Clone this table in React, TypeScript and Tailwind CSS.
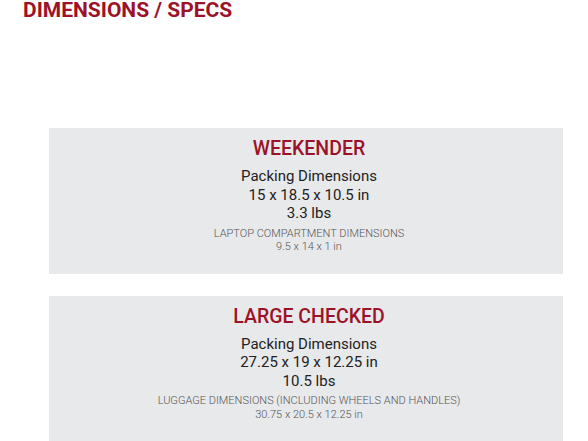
const specs = [
  {
    name: 'WEEKENDER',
    packing: '15 x 18.5 x 10.5 in',
    weight: '3.3 lbs',
    extraLabel: 'LAPTOP COMPARTMENT DIMENSIONS',
    extraValue: '9.5 x 14 x 1 in',
  },
  {
    name: 'LARGE CHECKED',
    packing: '27.25 x 19 x 12.25 in',
    weight: '10.5 lbs',
    extraLabel: 'LUGGAGE DIMENSIONS (INCLUDING WHEELS AND HANDLES)',
    extraValue: '30.75 x 20.5 x 12.25 in',
  },
];

type Spec = (typeof specs)[number];

const SpecCard = ({ spec }: { spec: Spec }) => (
  <div className="w-[514px] bg-[#e8e9eb] pt-[9px] pb-[20px] pl-[6px] text-center">
    <h3 className="text-[19.5px] leading-[24px] font-medium text-[#9c1228]">{spec.name}</h3>
    <div className="mt-[6px] text-[15px] leading-[18.5px] text-[#222222]">
      <p>Packing Dimensions</p>
      <p>{spec.packing}</p>
      <p>{spec.weight}</p>
    </div>
    <div className="mt-[4px] text-[11px] leading-[13.5px] font-light text-[#555555]">
      <p>{spec.extraLabel}</p>
      <p>{spec.extraValue}</p>
    </div>
  </div>
);

export default function App() {
  return (
    <div className="min-h-[441px] bg-white font-['Roboto',sans-serif]">
      <h2 className="pl-[23px] text-[21px] leading-[20px] font-bold text-[#9c1228]">
        DIMENSIONS / SPECS
      </h2>
      <div className="mt-[108px] ml-[49px] flex flex-col gap-[22px]">
        {specs.map((spec) => (
          <SpecCard key={spec.name} spec={spec} />
        ))}
      </div>
    </div>
  );
}
